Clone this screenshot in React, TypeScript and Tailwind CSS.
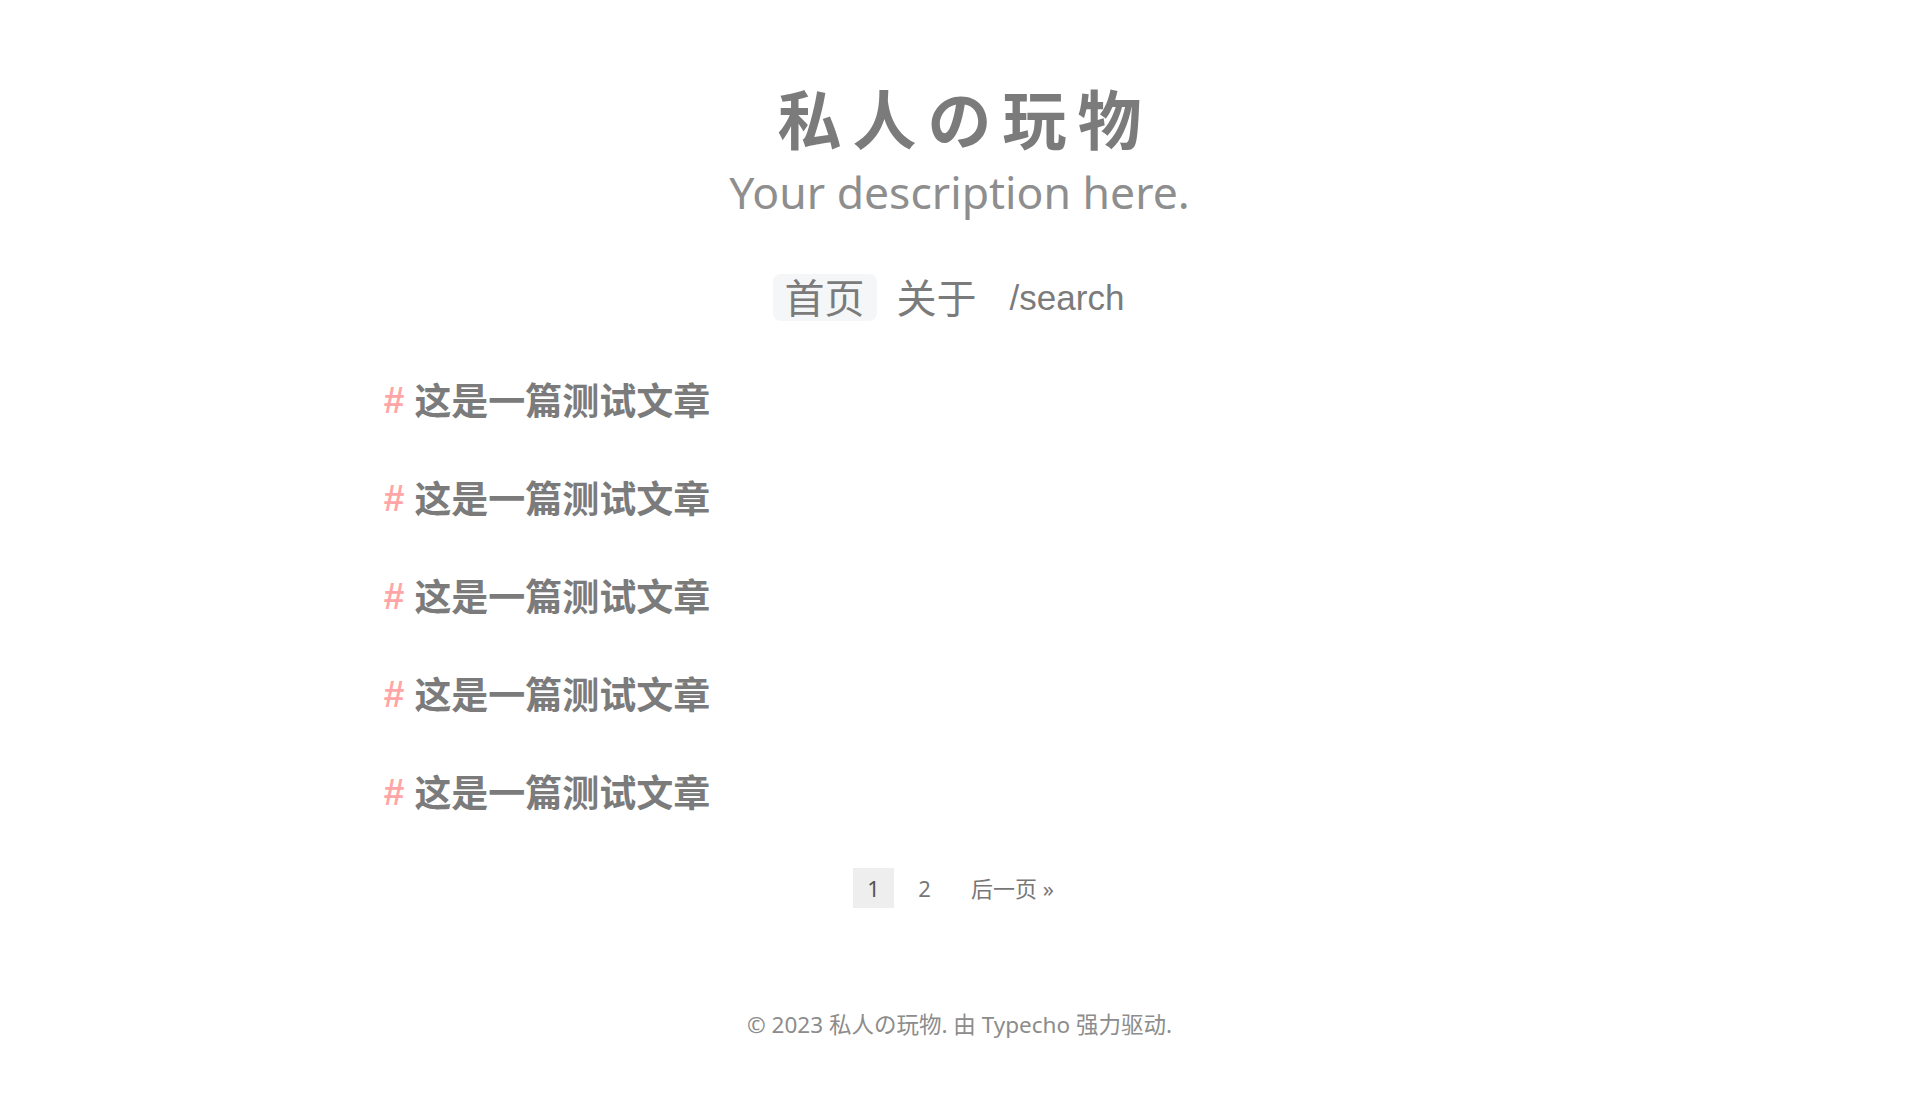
import React from "react";

const posts = ["这是一篇测试文章", "这是一篇测试文章", "这是一篇测试文章", "这是一篇测试文章", "这是一篇测试文章"];

const cjk = "font-['Noto_Sans','Noto_Sans_CJK_SC',sans-serif]";

export default function App() {
  return (
    <div className={`min-h-screen bg-white text-[#7b7b7b] ${cjk}`}>
      {/* Header */}
      <header className="flex flex-col items-center pt-[80px]">
        <h1 className="pl-[11px] text-[64px] font-bold leading-[80px] tracking-[11px] text-[#7b7b7b]">
          私人の玩物
        </h1>
        <p className="mt-[2px] text-[44.5px] leading-[60px] text-[#8e8e8e]">Your description here.</p>
      </header>

      {/* Nav */}
      <nav className="mt-[52px] flex items-center justify-center pr-[22px]">
        <a className="rounded-lg bg-[#f5f6f7] px-[12px] text-[40px] leading-[47px]">首页</a>
        <a className="ml-[8px] px-[12px] text-[40px] leading-[47px]">关于</a>
        <a className="ml-[21px] font-['Liberation_Sans',sans-serif] text-[35px] leading-[47px]">/search</a>
      </nav>

      {/* Posts */}
      <main className="mx-auto mt-[57px] w-[60%]">
        <ul className="flex flex-col gap-[52px]">
          {posts.map((t, i) => (
            <li key={i} className="flex items-center text-[37px] font-bold leading-[46px]">
              <span className="mr-[10px] font-['Liberation_Sans',sans-serif] text-[#ffa5a5]">#</span>
              <span className="text-[#7b7b7b]">{t}</span>
            </li>
          ))}
        </ul>

        {/* Pagination */}
        <div className="mt-[52px] flex items-center justify-center gap-[10px] text-[22px] text-[#777]">
          <span className="flex h-[40px] min-w-[41px] items-center justify-center bg-[#eeeeee] px-[12px] text-[#555]">1</span>
          <a className="flex h-[40px] min-w-[41px] items-center justify-center px-[12px]">2</a>
          <a className="ml-[4px] flex h-[40px] items-center px-[12px]">后一页 »</a>
        </div>
      </main>

      {/* Footer */}
      <footer className="mt-[100px] pb-[60px] text-center text-[22.5px] text-[#8c8c8c]">
        © 2023 私人の玩物. 由 Typecho 强力驱动.
      </footer>
    </div>
  );
}
